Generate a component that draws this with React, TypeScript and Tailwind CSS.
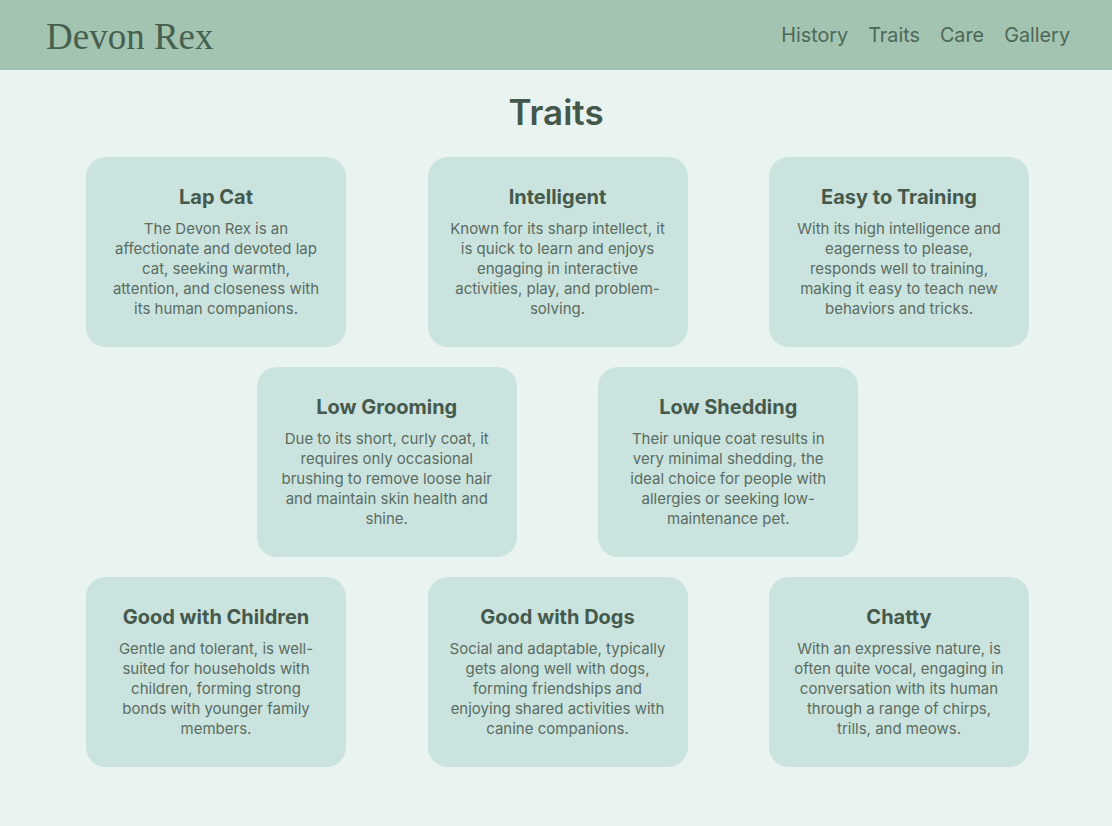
const traits = [
  [
    {
      title: "Lap Cat",
      text: "The Devon Rex is an affectionate and devoted lap cat, seeking warmth, attention, and closeness with its human companions.",
    },
    {
      title: "Intelligent",
      text: "Known for its sharp intellect, it is quick to learn and enjoys engaging in interactive activities, play, and problem-solving.",
    },
    {
      title: "Easy to Training",
      text: "With its high intelligence and eagerness to please, responds well to training, making it easy to teach new behaviors and tricks.",
    },
  ],
  [
    {
      title: "Low Grooming",
      text: "Due to its short, curly coat, it requires only occasional brushing to remove loose hair and maintain skin health and shine.",
    },
    {
      title: "Low Shedding",
      text: "Their unique coat results in very minimal shedding, the ideal choice for people with allergies or seeking low-maintenance pet.",
    },
  ],
  [
    {
      title: "Good with Children",
      text: "Gentle and tolerant, is well-suited for households with children, forming strong bonds with younger family members.",
    },
    {
      title: "Good with Dogs",
      text: "Social and adaptable, typically gets along well with dogs, forming friendships and enjoying shared activities with canine companions.",
    },
    {
      title: "Chatty",
      text: "With an expressive nature, is often quite vocal, engaging in conversation with its human through a range of chirps, trills, and meows.",
    },
  ],
];

function TraitCard({ title, text }: { title: string; text: string }) {
  return (
    <div className="w-[260px] h-[190px] rounded-[20px] bg-[#cae3de] px-[21px] pt-[25px] text-center">
      <h3 className="text-[20px] leading-[30px] font-bold text-[#45594d]">{title}</h3>
      <p className="mt-[7px] text-[15px] leading-[20px] text-[#5a6c62]">{text}</p>
    </div>
  );
}

export default function App() {
  return (
    <div className="min-h-[826px] bg-[#e9f3f0] font-['Inter',sans-serif]">
      {/* header */}
      <header className="h-[70px] bg-[#a3c4b1] flex items-center justify-between pl-[46px] pr-[42px]">
        <h1 className="font-['Liberation_Serif',serif] text-[37px] text-[#46604f] pt-1">Devon Rex</h1>
        <nav className="flex gap-5 pt-[2px] text-[19.8px] text-[#4e6758]">
          <a href="#">History</a>
          <a href="#">Traits</a>
          <a href="#">Care</a>
          <a href="#">Gallery</a>
        </nav>
      </header>

      {/* traits */}
      <main className="pt-5 pb-10">
        <h2 className="text-center text-[35px] leading-[44px] font-semibold text-[#43574b]">Traits</h2>
        <div className="mt-[23px] flex flex-col gap-5">
          {traits.map((row, i) => (
            <div key={i} className="flex justify-center gap-[81.5px] pl-[3px]">
              {row.map((t) => (
                <TraitCard key={t.title} {...t} />
              ))}
            </div>
          ))}
        </div>
      </main>
    </div>
  );
}
